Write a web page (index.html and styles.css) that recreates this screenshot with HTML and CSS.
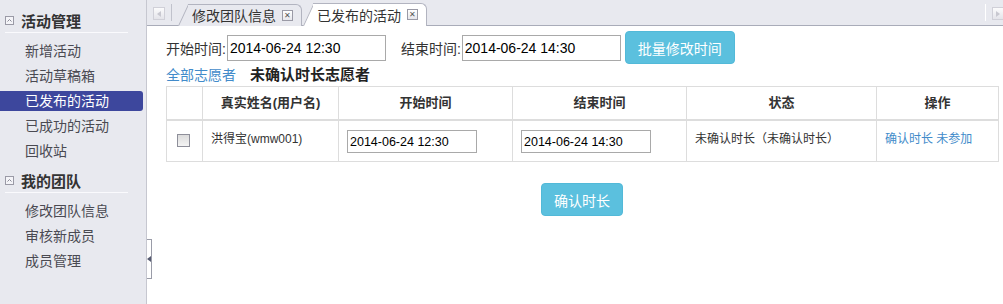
FILE: index.html
```html
<!DOCTYPE html>
<html lang="zh-CN">
<head>
    <meta charset="UTF-8">
    <title>已发布的活动</title>
    <link rel="stylesheet" href="styles.css">
</head>
<body>

<div class="app">
    <aside class="sidebar">
        <div class="group">
            <div class="group-title">
                <svg class="fold" width="9" height="9" viewBox="0 0 9 9"><rect x="0.5" y="0.5" width="8" height="8" fill="#f4f4f8" stroke="#9a9aa6"/><path d="M2.5 5.5 L4.5 3.5 L6.5 5.5" fill="none" stroke="#8a8a96"/></svg>
                活动管理
            </div>
            <ul class="menu">
                <li>新增活动</li>
                <li>活动草稿箱</li>
                <li class="active">已发布的活动</li>
                <li>已成功的活动</li>
                <li>回收站</li>
            </ul>
        </div>
        <div class="group">
            <div class="group-title">
                <svg class="fold" width="9" height="9" viewBox="0 0 9 9"><rect x="0.5" y="0.5" width="8" height="8" fill="#f4f4f8" stroke="#9a9aa6"/><path d="M2.5 5.5 L4.5 3.5 L6.5 5.5" fill="none" stroke="#8a8a96"/></svg>
                我的团队
            </div>
            <ul class="menu">
                <li>修改团队信息</li>
                <li>审核新成员</li>
                <li>成员管理</li>
            </ul>
        </div>
    </aside>

    <div class="collapse-handle">
        <svg width="4" height="6" viewBox="0 0 4 6"><path d="M4 0 L0 3 L4 6 Z" fill="#555a70"/></svg>
    </div>

    <div class="main">
        <div class="tabbar">
            <span class="scroll-btn">
                <svg width="4" height="6" viewBox="0 0 4 6"><path d="M4 0 L0 3 L4 6 Z" fill="#c8c8d0"/></svg>
            </span>
            <span class="sep"></span>
            <div class="tabs">
                <div class="tab">修改团队信息 <span class="close">✕</span></div>
                <div class="tab current">已发布的活动 <span class="close">✕</span></div>
            </div>
            <span class="sep right"></span>
            <span class="scroll-btn">
                <svg width="4" height="6" viewBox="0 0 4 6"><path d="M0 0 L4 3 L0 6 Z" fill="#c8c8d0"/></svg>
            </span>
        </div>

        <div class="panel">
            <div class="time-row">
                <label>开始时间:</label><input type="text" class="time-input" value="2014-06-24 12:30">
                <label class="end-label">结束时间:</label><input type="text" class="time-input" value="2014-06-24 14:30">
                <button class="btn-info batch">批量修改时间</button>
            </div>

            <div class="filter-row">
                <a href="#" class="link">全部志愿者</a>
                <strong>未确认时长志愿者</strong>
            </div>

            <table class="grid">
                <colgroup>
                    <col style="width: 36px">
                    <col style="width: 136px">
                    <col style="width: 174px">
                    <col style="width: 174px">
                    <col style="width: 190px">
                    <col style="width: 122px">
                </colgroup>
                <thead>
                    <tr>
                        <th></th>
                        <th>真实姓名(用户名)</th>
                        <th>开始时间</th>
                        <th>结束时间</th>
                        <th>状态</th>
                        <th>操作</th>
                    </tr>
                </thead>
                <tbody>
                    <tr>
                        <td class="check"><input type="checkbox"></td>
                        <td>洪得宝(wmw001)</td>
                        <td><input type="text" class="cell-input" value="2014-06-24 12:30"></td>
                        <td><input type="text" class="cell-input" value="2014-06-24 14:30"></td>
                        <td>未确认时长（未确认时长）</td>
                        <td><a href="#" class="link">确认时长</a> <a href="#" class="link">未参加</a></td>
                    </tr>
                </tbody>
            </table>

            <div class="actions">
                <button class="btn-info">确认时长</button>
            </div>
        </div>
    </div>
</div>

</body>
</html>
```

FILE: styles.css
```css
body {
    margin: 0;
    font-family: "Liberation Sans", "Noto Sans CJK SC", sans-serif;
    font-size: 14px;
    color: #333;
    background-color: #fff;
}

.app {
    position: relative;
    display: flex;
    height: 304px;
    overflow: hidden;
}

/* sidebar */

.sidebar {
    width: 146px;
    flex-shrink: 0;
    background-color: #e8e9ef;
    border-right: 1px solid #c6c7d0;
}

.group {
    margin-top: 7px;
}

.group:first-child {
    margin-top: 8px;
}

.group-title {
    display: flex;
    align-items: center;
    height: 24px;
    margin: 0 18px 0 5px;
    border-bottom: 1px solid #fafafd;
    font-size: 15px;
    font-weight: bold;
    color: #333;
}

.fold {
    margin-right: 7px;
    margin-top: 1px;
}

.menu {
    list-style: none;
    margin: 0;
    padding: 8px 0 0;
}

.menu li {
    height: 20px;
    line-height: 20px;
    margin-bottom: 5px;
    padding-left: 25px;
    width: 118px;
    color: #4a4a52;
    border-radius: 0 3px 3px 0;
}

.menu li.active {
    background-color: #3d479d;
    color: #fff;
}

.collapse-handle {
    position: absolute;
    left: 147px;
    top: 239px;
    width: 4px;
    height: 38px;
    border: 1px solid #9a9ca8;
    border-left: none;
    background-color: #fff;
    display: flex;
    align-items: center;
    justify-content: center;
}

/* tabs */

.main {
    flex: 1;
    display: flex;
    flex-direction: column;
}

.tabbar {
    height: 25px;
    background-color: #e8e9ef;
    border-bottom: 1px solid #a9acb9;
    display: flex;
    align-items: flex-end;
}

.scroll-btn {
    width: 10px;
    height: 11px;
    margin: 0 0 5px 6px;
    border: 1px solid #d0d0d8;
    background: linear-gradient(#fbfbfc, #e4e4ea);
    display: flex;
    align-items: center;
    justify-content: center;
}

.sep {
    width: 1px;
    height: 17px;
    margin: 0 0 4px 6px;
    background-color: #c0c2cc;
}

.sep.right {
    margin-left: auto;
    background-color: #fff;
}

.tabs {
    position: relative;
    z-index: 0;
    display: flex;
    align-items: flex-end;
}

.tab {
    position: relative;
    display: flex;
    align-items: center;
    height: 20px;
    margin: 0 0 -1px 16px;
    padding: 0 8px 1px 4px;
    background-color: #e8e9ef;
    border-top: 1px solid #b2b4c0;
    border-right: 1px solid #b2b4c0;
    border-radius: 0 6px 0 0;
    color: #333;
    font-size: 14px;
    white-space: nowrap;
}

.tab::before {
    content: "";
    position: absolute;
    top: -1px;
    bottom: 0;
    left: -10px;
    width: 14px;
    background-color: inherit;
    border-left: 1px solid #b2b4c0;
    border-top: 1px solid #b2b4c0;
    transform: skewX(-25deg);
    transform-origin: bottom left;
    z-index: -1;
}

.tab.current {
    margin-left: 11px;
    background-color: #fff;
    height: 21px;
}

.close {
    width: 9px;
    height: 9px;
    margin-left: 6px;
    border: 1px solid #9a9aa6;
    background: linear-gradient(#fff, #e6e6ec);
    font-size: 8px;
    line-height: 9px;
    text-align: center;
    color: #555;
}

/* content */

.panel {
    flex: 1;
    padding: 5px 5px 0 19px;
}

.time-row {
    display: flex;
    align-items: center;
    height: 33px;
}

.time-row label {
    color: #333;
    font-size: 14px;
}

.end-label {
    margin-left: 15px;
}

.time-input {
    width: 159px;
    height: 26px;
    box-sizing: border-box;
    margin: 0 0 0 1px;
    padding: 0 2px;
    border: 1px solid #a9a9a9;
    font-family: "Liberation Sans", sans-serif;
    font-size: 14px;
    color: #000;
}

.btn-info {
    height: 33px;
    padding: 0 12px;
    border: 1px solid #52b9d8;
    border-radius: 4px;
    background-color: #5bc0de;
    color: #fff;
    font-family: "Liberation Sans", "Noto Sans CJK SC", sans-serif;
    font-size: 14px;
    cursor: pointer;
}

.batch {
    margin-left: 4px;
}

.filter-row {
    height: 22px;
    line-height: 22px;
}

.filter-row strong {
    margin-left: 10px;
    font-size: 15px;
    color: #222;
}

.link {
    color: #428bca;
    text-decoration: none;
}

.grid {
    width: 832px;
    table-layout: fixed;
    border-collapse: collapse;
}

.grid th, .grid td {
    border: 1px solid #ddd;
}

.grid th {
    height: 20px;
    padding: 6px 8px;
    line-height: 20px;
    font-size: 13px;
    font-weight: bold;
    color: #333;
    text-align: center;
    border-bottom: 2px solid #ddd;
}

.grid td {
    height: 23px;
    padding: 8px;
    line-height: 20px;
    font-size: 12px;
    color: #333;
    vertical-align: top;
}

.grid td.check {
    text-align: center;
    padding: 0;
}

.grid input[type="checkbox"] {
    appearance: none;
    width: 13px;
    height: 13px;
    margin: 13px 0 0 -2px;
    border: 1px solid #8e8f9a;
    background: linear-gradient(#dcdcdc, #f4f4f4);
}

.cell-input {
    width: 130px;
    height: 23px;
    box-sizing: border-box;
    margin: 1px 0 0 0;
    padding: 0 2px;
    border: 1px solid #a9a9a9;
    font-family: "Liberation Sans", sans-serif;
    font-size: 12.5px;
    color: #000;
    display: block;
}

.actions {
    width: 832px;
    margin-top: 21px;
    text-align: center;
}
```
